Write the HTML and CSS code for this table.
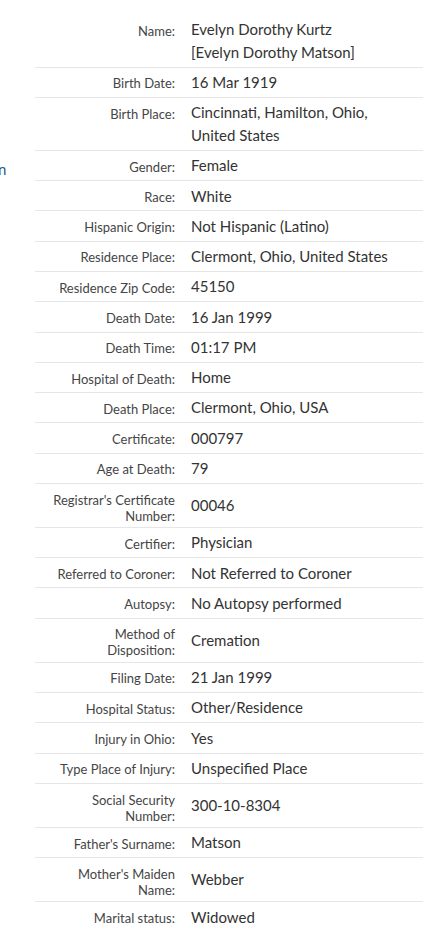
FILE: index.html
```html
<!DOCTYPE html>
<html lang="en">
<head>
<meta charset="utf-8">
<title>Record</title>
<link rel="stylesheet" href="styles.css">
</head>
<body>
<div class="page">
  <aside class="side"><a class="side-link" href="#">n</a></aside>
  <main class="record">
    <div class="row"><div class="label">Name:</div><div class="value">Evelyn Dorothy Kurtz<br>[Evelyn Dorothy Matson]</div></div>
    <div class="row"><div class="label">Birth Date:</div><div class="value">16 Mar 1919</div></div>
    <div class="row"><div class="label">Birth Place:</div><div class="value">Cincinnati, Hamilton, Ohio,<br>United States</div></div>
    <div class="row"><div class="label">Gender:</div><div class="value">Female</div></div>
    <div class="row"><div class="label">Race:</div><div class="value">White</div></div>
    <div class="row"><div class="label">Hispanic Origin:</div><div class="value">Not Hispanic (Latino)</div></div>
    <div class="row"><div class="label">Residence Place:</div><div class="value">Clermont, Ohio, United States</div></div>
    <div class="row"><div class="label">Residence Zip Code:</div><div class="value">45150</div></div>
    <div class="row"><div class="label">Death Date:</div><div class="value">16 Jan 1999</div></div>
    <div class="row"><div class="label">Death Time:</div><div class="value">01:17 PM</div></div>
    <div class="row"><div class="label">Hospital of Death:</div><div class="value">Home</div></div>
    <div class="row"><div class="label">Death Place:</div><div class="value">Clermont, Ohio, USA</div></div>
    <div class="row"><div class="label">Certificate:</div><div class="value">000797</div></div>
    <div class="row"><div class="label">Age at Death:</div><div class="value">79</div></div>
    <div class="row"><div class="label">Registrar's Certificate Number:</div><div class="value">00046</div></div>
    <div class="row"><div class="label">Certifier:</div><div class="value">Physician</div></div>
    <div class="row"><div class="label">Referred to Coroner:</div><div class="value">Not Referred to Coroner</div></div>
    <div class="row"><div class="label">Autopsy:</div><div class="value">No Autopsy performed</div></div>
    <div class="row"><div class="label">Method of Disposition:</div><div class="value">Cremation</div></div>
    <div class="row"><div class="label">Filing Date:</div><div class="value">21 Jan 1999</div></div>
    <div class="row"><div class="label">Hospital Status:</div><div class="value">Other/Residence</div></div>
    <div class="row"><div class="label">Injury in Ohio:</div><div class="value">Yes</div></div>
    <div class="row"><div class="label">Type Place of Injury:</div><div class="value">Unspecified Place</div></div>
    <div class="row"><div class="label">Social Security Number:</div><div class="value">300-10-8304</div></div>
    <div class="row"><div class="label">Father's Surname:</div><div class="value">Matson</div></div>
    <div class="row"><div class="label">Mother's Maiden Name:</div><div class="value">Webber</div></div>
    <div class="row"><div class="label">Marital status:</div><div class="value">Widowed</div></div>
  </main>
</div>
</body>
</html>
```
FILE: styles.css
```css
html, body {
  margin: 0;
  padding: 0;
  background: #ffffff;
}
body {
  font-family: Lato, "Noto Sans", sans-serif;
  color: #333333;
}
.page {
  display: flex;
  align-items: flex-start;
}
.side {
  width: 35px;
  flex: none;
  overflow: hidden;
  padding-top: 159px;
}
.side-link {
  display: block;
  font-size: 15px;
  line-height: 20px;
  color: #2a5d75;
  text-decoration: none;
  margin-left: -2px;
}
.record {
  flex: 1;
  padding-top: 15px;
}
.row {
  display: grid;
  grid-template-columns: 140px 1fr;
  column-gap: 16px;
  border-bottom: 1px solid #e6e6e6;
}
.label {
  align-self: start;
  text-align: right;
  font-size: 13px;
  line-height: 16px;
  color: #454545;
  padding: 7.7px 0 3.3px 13px;
}
.value {
  align-self: center;
  font-size: 15px;
  line-height: 22.5px;
  color: #333333;
  padding: 3.4px 0;
}
```
